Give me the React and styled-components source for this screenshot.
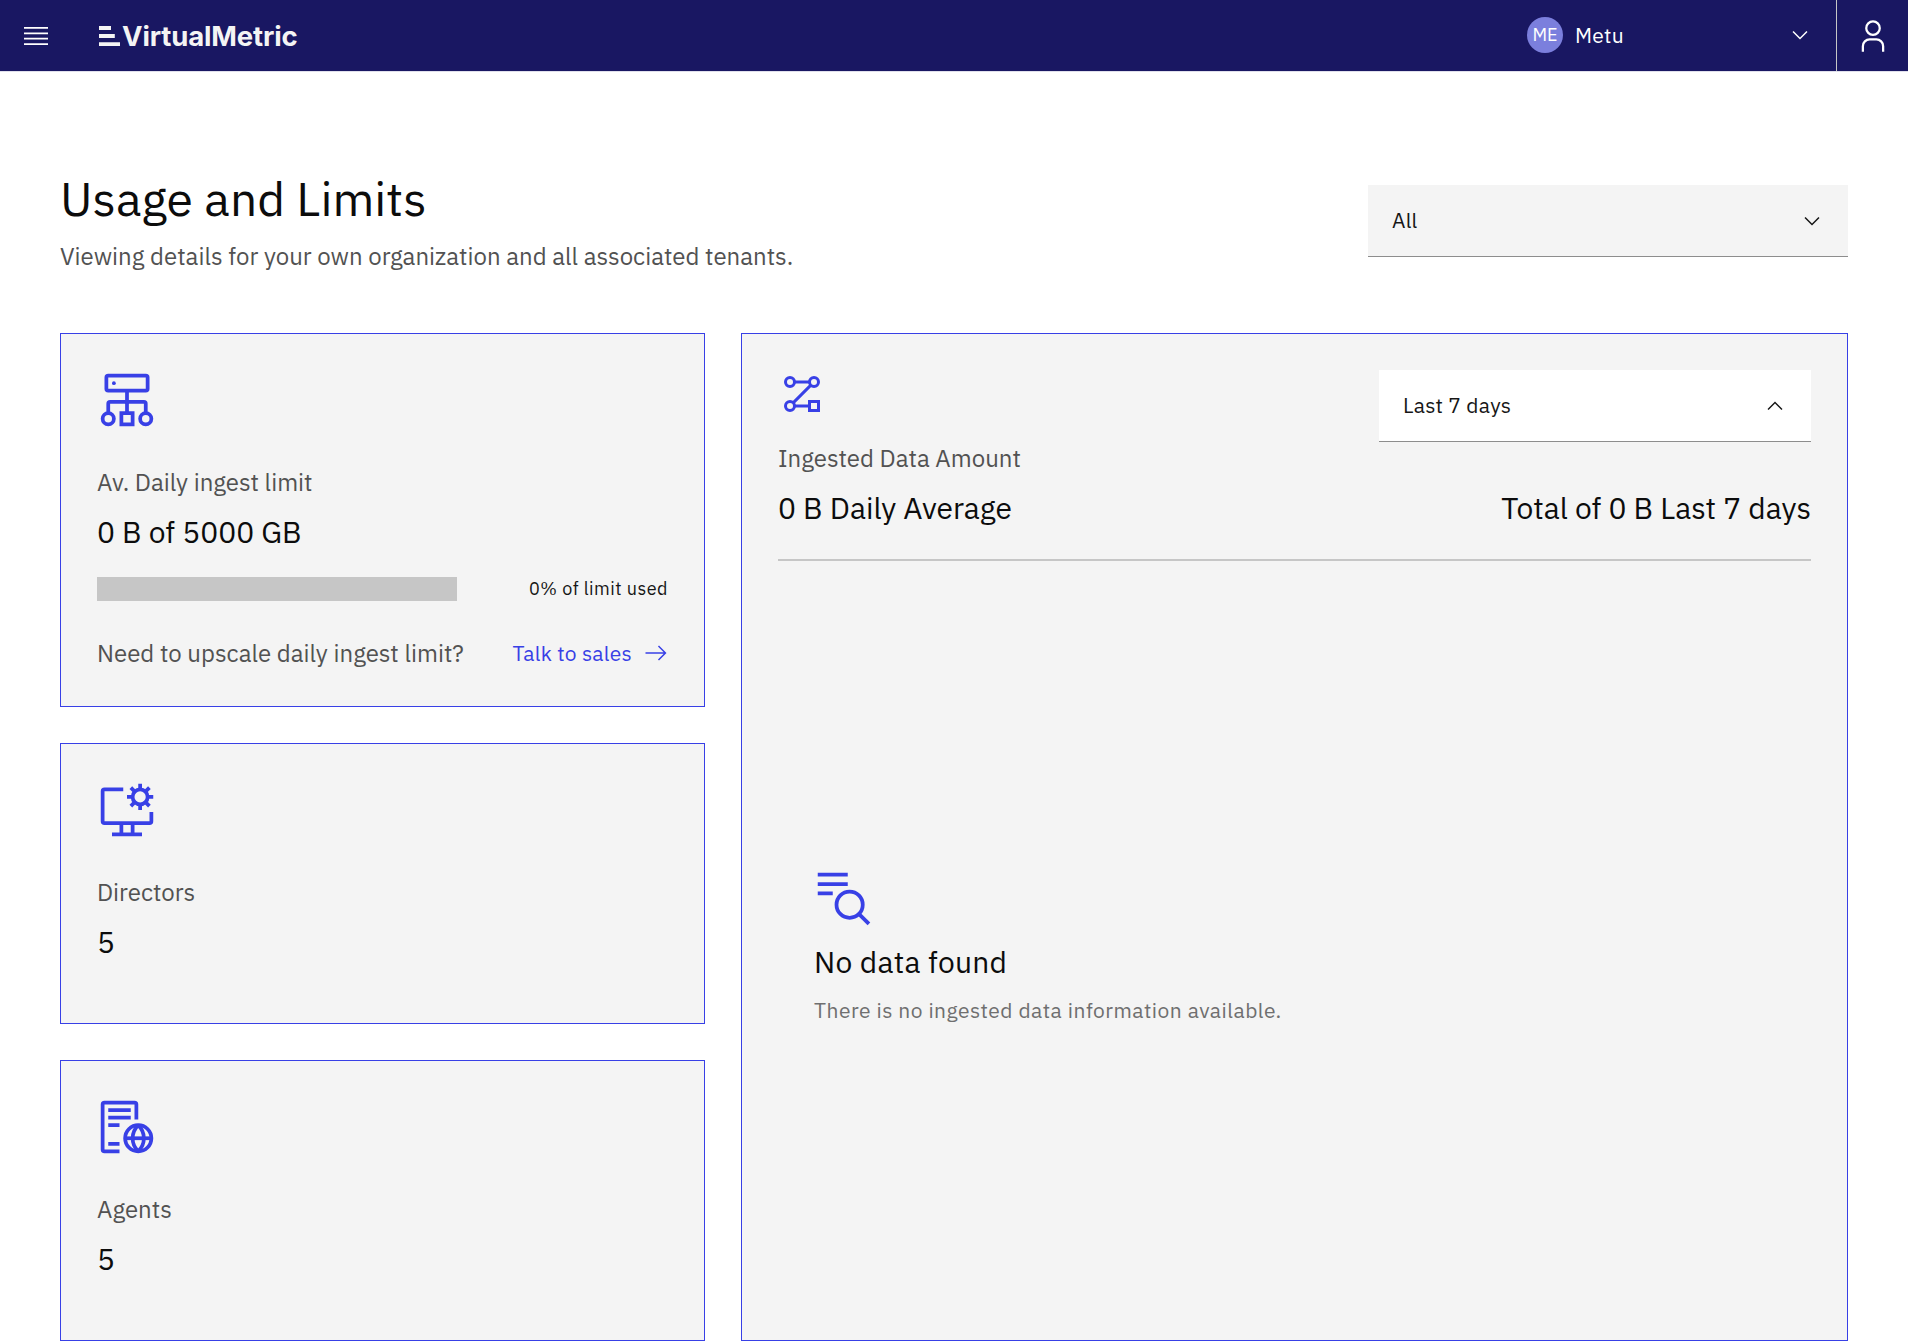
import React from "react";
import styled, { createGlobalStyle } from "styled-components";

const color = {
  navy: "#191762",
  blue: "#3840e6",
  avatar: "#7b7fdd",
  layer: "#f4f4f4",
  text: "#0c0c0c",
  secondary: "#525252",
  helper: "#6f6f6f",
  line: "#c6c6c6",
  field: "#8d8d8d",
};

const GlobalStyle = createGlobalStyle`
  *, *::before, *::after { box-sizing: border-box; }
  html, body { margin: 0; padding: 0; background: #ffffff; }
  body {
    font-family: "IBM Plex Sans", Roboto, "Noto Sans", sans-serif;
    font-size: 21px;
    line-height: 28px;
    color: ${color.text};
  }
  h1, h2, p { margin: 0; font-weight: 400; }
  svg { display: block; flex: none; }
`;

const Page = styled.div`
  display: flex;
  flex-direction: column;
  height: 1341px;
  overflow: hidden;
`;

const Header = styled.header`
  display: flex;
  height: 72px;
  flex: none;
  background: ${color.navy};
  border-bottom: 1px solid #e0e0ec;
`;

const MenuButton = styled.button`
  display: flex;
  padding: 21px;
  border: 0;
  background: transparent;
  color: #ffffff;
`;

const Brand = styled.div`
  display: flex;
  align-items: center;
  gap: 2px;
  margin-left: 27px;
  padding-top: 1px;
  color: #f4f4f4;
`;

const BrandName = styled.span`
  font-family: Inter, "Open Sans", sans-serif;
  font-size: 27.5px;
  line-height: 34px;
  font-weight: 700;
  letter-spacing: -0.15px;
`;

const TenantSwitcher = styled.div`
  display: flex;
  align-items: center;
  gap: 12px;
  width: 309px;
  margin-left: auto;
  padding: 0 24px 1px 0;
  color: #ffffff;
`;

const Avatar = styled.span`
  display: flex;
  align-items: center;
  justify-content: center;
  width: 36px;
  height: 36px;
  border-radius: 50%;
  background: ${color.avatar};
  font-size: 18px;
  line-height: 24px;
`;

const TenantName = styled.span`
  flex: 1;
  letter-spacing: 0.24px;
`;

const UserButton = styled.button`
  display: flex;
  align-items: center;
  justify-content: center;
  width: 72px;
  padding: 0;
  border: 0;
  border-left: 1px solid ${color.line};
  background: transparent;
  color: #ffffff;
`;

const Main = styled.main`
  display: flex;
  flex: 1;
  flex-direction: column;
  gap: 61px;
  padding: 96px 60px 0;
`;

const PageHead = styled.div`
  display: flex;
  justify-content: space-between;
`;

const Title = styled.h1`
  font-size: 48px;
  line-height: 60px;
`;

const Subtitle = styled.p`
  margin-top: 12px;
  font-size: 24px;
  line-height: 32px;
  color: ${color.secondary};
`;

const Select = styled.div`
  display: flex;
  align-items: center;
  justify-content: space-between;
  width: ${(p) => p.$width}px;
  height: 72px;
  margin-top: ${(p) => p.$top || 0}px;
  padding: 0 24px;
  background: ${(p) => (p.$light ? "#ffffff" : color.layer)};
  box-shadow: inset 0 -1px 0 ${color.field};
  color: #161616;
`;

const SelectText = styled.span`
  padding-bottom: 2px;
  letter-spacing: 0.24px;
`;

const Grid = styled.div`
  display: grid;
  grid-template-columns: 645px 1fr;
  gap: 36px;
`;

const Column = styled.div`
  display: grid;
  grid-template-rows: 374px 281px 281px;
  gap: 36px;
`;

const Card = styled.section`
  display: flex;
  flex-direction: column;
  padding: 36px;
  border: 1px solid ${color.blue};
  background: ${color.layer};
`;

const CardIcon = styled.div`
  color: ${color.blue};
  margin-bottom: ${(p) => p.$gap}px;
`;

const Label = styled.p`
  font-size: 24px;
  line-height: 32px;
  color: ${color.secondary};
`;

const Value = styled.p`
  margin-top: ${(p) => p.$top ?? 14}px;
  font-size: 30px;
  line-height: 40px;
  letter-spacing: ${(p) => p.$spacing ?? 0}px;
`;

const Split = styled.div`
  display: flex;
  align-items: center;
  justify-content: space-between;
  margin-top: ${(p) => p.$top}px;
`;

const Meter = styled.div`
  width: 360px;
  height: 24px;
  background: ${color.line};
`;

const MeterText = styled.span`
  font-size: 18px;
  line-height: 24px;
  letter-spacing: 0.48px;
  color: #161616;
`;

const SalesLink = styled.a`
  display: flex;
  gap: 12px;
  color: ${color.blue};
  letter-spacing: 0.24px;
`;

const LinkArrow = styled.span`
  padding-top: 2px;
`;

const ChartHead = styled.div`
  display: flex;
  justify-content: space-between;
  padding-bottom: 31px;
  border-bottom: 2px solid ${color.line};
`;

const ChartRange = styled.div`
  display: flex;
  flex-direction: column;
  align-items: flex-end;
  justify-content: space-between;
`;

const Empty = styled.div`
  display: flex;
  flex: 1;
  flex-direction: column;
  justify-content: center;
  padding: 28px 36px 0;
`;

const EmptyText = styled.p`
  margin-top: 14px;
  letter-spacing: 0.48px;
  color: ${color.helper};
`;

const Menu = () => (
  <svg width="30" height="30" viewBox="0 0 20 20" fill="currentColor">
    <path d="M2 14.8h16V16H2zM2 11.2h16v1.2H2zM2 7.6h16v1.2H2zM2 4h16v1.2H2z" />
  </svg>
);

const BrandMark = () => (
  <svg width="21" height="22" viewBox="0 0 21 22" fill="currentColor">
    <path d="M0 1h12v4H0zM0 9h15.8v4H0zM0 17.3h21V21H0z" />
  </svg>
);

const Chevron = ({ up }) => (
  <svg width="24" height="24" viewBox="0 0 16 16" fill="currentColor">
    {up ? (
      <path d="M8 5l5 5-.7.7L8 6.4l-4.3 4.3L3 10z" />
    ) : (
      <path d="M8 11L3 6l.7-.7L8 9.6l4.3-4.3.7.7z" />
    )}
  </svg>
);

const User = () => (
  <svg width="36" height="36" viewBox="0 0 32 32" fill="currentColor">
    <path d="M16 4a5 5 0 1 1-5 5 5 5 0 0 1 5-5m0-2a7 7 0 1 0 7 7 7 7 0 0 0-7-7zM26 30h-2v-5a5 5 0 0 0-5-5h-6a5 5 0 0 0-5 5v5H6v-5a7 7 0 0 1 7-7h6a7 7 0 0 1 7 7z" />
  </svg>
);

const Arrow = () => (
  <svg width="24" height="24" viewBox="0 0 16 16" fill="currentColor">
    <path d="M9.3 3.7l3.8 3.8H1v1h12.1l-3.8 3.8.7.7 5-5-5-5z" />
  </svg>
);

const Outline = ({ size = 60, children }) => (
  <svg width={size} height={size} viewBox="0 0 32 32" fill="none" stroke="currentColor" strokeWidth="2">
    {children}
  </svg>
);

const LoadBalancer = () => (
  <Outline>
    <rect x="5" y="3" width="22" height="8" rx="1" />
    <circle cx="9" cy="7" r="1" fill="currentColor" stroke="none" />
    <path d="M16 11v12M6 23v-5a1 1 0 0 1 1-1h18a1 1 0 0 1 1 1v5" />
    <circle cx="6" cy="26" r="3" />
    <circle cx="26" cy="26" r="3" />
    <rect x="13" y="23" width="6" height="6" />
  </Outline>
);

const ScreenSettings = () => (
  <Outline>
    <path d="M14 5H4a1 1 0 0 0-1 1v16a1 1 0 0 0 1 1h24a1 1 0 0 0 1-1v-5M13 23v5M19 23v5M8 29h16" />
    <circle cx="23" cy="9" r="4" />
    {[0, 45, 90, 135, 180, 225, 270, 315].map((a) => (
      <path key={a} d="M23 5V2" transform={`rotate(${a} 23 9)`} />
    ))}
  </Outline>
);

const DocumentGlobe = () => (
  <Outline>
    <path d="M21 12V4a1 1 0 0 0-1-1H4a1 1 0 0 0-1 1v24a1 1 0 0 0 1 1h8M6 7h12M6 11h12M6 15h6M6 25h6" />
    <circle cx="22" cy="22" r="7" />
    <path d="M15 22h14" />
    <path d="M22 15c-4 4-4 10 0 14M22 15c4 4 4 10 0 14" />
  </Outline>
);

const DataPath = () => (
  <Outline size={48}>
    <circle cx="8" cy="8" r="3" />
    <circle cx="24" cy="8" r="3" />
    <circle cx="8" cy="24" r="3" />
    <rect x="21" y="21" width="6" height="6" />
    <path d="M11 8h10M11 24h10M21.9 10.1L10.1 21.9" />
  </Outline>
);

const SearchList = () => (
  <Outline>
    <path d="M2 3h16M2 8h16M2 13h8" />
    <circle cx="19" cy="19" r="7" />
    <path d="M23.9 23.9l5.4 5.4" />
  </Outline>
);

const CountCard = ({ icon, label, value }) => (
  <Card>
    <CardIcon $gap={36}>{icon}</CardIcon>
    <Label>{label}</Label>
    <Value>{value}</Value>
  </Card>
);

export default function App() {
  return (
    <Page>
      <GlobalStyle />
      <Header>
        <MenuButton aria-label="Menu">
          <Menu />
        </MenuButton>
        <Brand>
          <BrandMark />
          <BrandName>VirtualMetric</BrandName>
        </Brand>
        <TenantSwitcher>
          <Avatar>ME</Avatar>
          <TenantName>Metu</TenantName>
          <Chevron />
        </TenantSwitcher>
        <UserButton aria-label="User">
          <User />
        </UserButton>
      </Header>
      <Main>
        <PageHead>
          <div>
            <Title>Usage and Limits</Title>
            <Subtitle>Viewing details for your own organization and all associated tenants.</Subtitle>
          </div>
          <Select $width={480} $top={17}>
            <SelectText>All</SelectText>
            <Chevron />
          </Select>
        </PageHead>
        <Grid>
          <Column>
            <Card>
              <CardIcon $gap={36}>
                <LoadBalancer />
              </CardIcon>
              <Label>Av. Daily ingest limit</Label>
              <Value>0 B of 5000 GB</Value>
              <Split $top={25}>
                <Meter />
                <MeterText>0% of limit used</MeterText>
              </Split>
              <Split $top={36}>
                <Label>Need to upscale daily ingest limit?</Label>
                <SalesLink>
                  Talk to sales
                  <LinkArrow>
                    <Arrow />
                  </LinkArrow>
                </SalesLink>
              </Split>
            </Card>
            <CountCard icon={<ScreenSettings />} label="Directors" value="5" />
            <CountCard icon={<DocumentGlobe />} label="Agents" value="5" />
          </Column>
          <Card>
            <ChartHead>
              <div>
                <CardIcon $gap={24}>
                  <DataPath />
                </CardIcon>
                <Label>Ingested Data Amount</Label>
                <Value>0 B Daily Average</Value>
              </div>
              <ChartRange>
                <Select $width={432} $light>
                  <SelectText>Last 7 days</SelectText>
                  <Chevron up />
                </Select>
                <Value $top={0}>Total of 0 B Last 7 days</Value>
              </ChartRange>
            </ChartHead>
            <Empty>
              <CardIcon $gap={13}>
                <SearchList />
              </CardIcon>
              <Value $top={0} $spacing={0.24}>
                No data found
              </Value>
              <EmptyText>There is no ingested data information available.</EmptyText>
            </Empty>
          </Card>
        </Grid>
      </Main>
    </Page>
  );
}
